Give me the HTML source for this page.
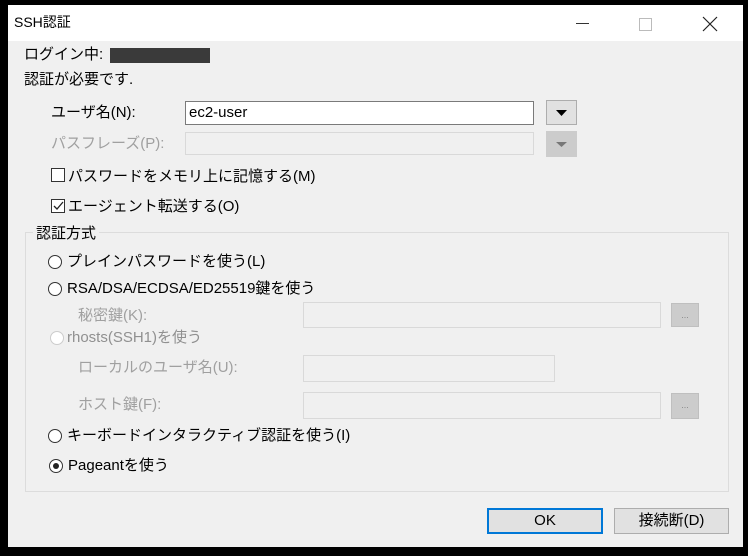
<!DOCTYPE html>
<html><head><meta charset="utf-8"><style>
*{box-sizing:border-box;margin:0;padding:0}
body{width:748px;height:556px;background:#000;position:relative;overflow:hidden;font-family:"Liberation Sans","Noto Sans CJK JP",sans-serif;font-size:15px;color:#000}
.win{position:absolute;left:8px;top:5px;width:735px;height:542px;background:#f0f0f0}
.title{position:absolute;left:0;top:0;width:735px;height:36px;background:#fff}
.a{position:absolute;white-space:nowrap;line-height:18px}
.g{color:#a0a0a0}
.in{position:absolute;background:#fff;border:1px solid #7a7a7a}
.dis{position:absolute;background:#f0f0f0;border:1px solid #d9d9d9}
.btn{position:absolute;background:#e1e1e1;border:1px solid #adadad;text-align:center}
.btnd{position:absolute;background:#cccccc;border:1px solid #bfbfbf;color:#888;text-align:center;font-size:9px;line-height:22px}
.cb{position:absolute;width:14px;height:14px;border:1px solid #333;background:#fff}
.rd{position:absolute;width:14px;height:14px;border:1px solid #333;border-radius:50%;background:#fff}
</style></head><body>
<div class="win">
<div class="title"><span class="a" style="left:6px;top:8px;font-size:14px">SSH認証</span>
<div style="position:absolute;left:568px;top:18px;width:13px;height:1px;background:#333"></div>
<div style="position:absolute;left:631px;top:13px;width:13px;height:13px;border:1px solid #bbb"></div>
<svg style="position:absolute;left:694px;top:11px" width="16" height="16"><path d="M1 1L15 15M15 1L1 15" stroke="#222" stroke-width="1.2"/></svg>
</div>
</div>
<span class="a" style="left:24px;top:46px">ログイン中:</span>
<div style="position:absolute;left:110px;top:48px;width:100px;height:15px;background:#3a3a3a"></div>
<span class="a" style="left:24px;top:71px">認証が必要です.</span>
<span class="a" style="left:51px;top:104px">ユーザ名(N):</span>
<div class="in" style="left:185px;top:101px;width:349px;height:24px"><span class="a" style="left:3px;top:2px">ec2-user</span></div>
<div class="btn" style="left:546px;top:100px;width:31px;height:25px"><svg width="29" height="23"><path d="M9 9L20 9L14.5 15Z" fill="#000"/></svg></div>
<span class="a g" style="left:51px;top:135px">パスフレーズ(P):</span>
<div class="dis" style="left:185px;top:132px;width:349px;height:23px"></div>
<div class="btn" style="left:546px;top:131px;width:31px;height:26px;background:#ccc;border-color:#ccc"><svg width="29" height="24"><path d="M9 10L20 10L14.5 15Z" fill="#777"/></svg></div>
<div class="cb" style="left:51px;top:168px"></div>
<span class="a" style="left:68px;top:168px">パスワードをメモリ上に記憶する(M)</span>
<div class="cb" style="left:51px;top:199px"><svg style="position:absolute;left:0;top:0" width="12" height="12"><path d="M2 6L5 9L11 2" stroke="#222" stroke-width="1.3" fill="none"/></svg></div>
<span class="a" style="left:68px;top:198px">エージェント転送する(O)</span>
<div style="position:absolute;left:25px;top:232px;width:704px;height:260px;border:1px solid #dcdcdc"></div>
<span class="a" style="left:33px;top:225px;background:#f0f0f0;padding:0 3px">認証方式</span>
<div class="rd" style="left:48px;top:255px"></div>
<span class="a" style="left:67px;top:253px">プレインパスワードを使う(L)</span>
<div class="rd" style="left:48px;top:282px"></div>
<span class="a" style="left:67px;top:280px">RSA/DSA/ECDSA/ED25519鍵を使う</span>
<span class="a g" style="left:78px;top:307px">秘密鍵(K):</span>
<div class="dis" style="left:303px;top:302px;width:358px;height:26px"></div>
<div class="btnd" style="left:671px;top:303px;width:28px;height:24px">...</div>
<div class="rd" style="left:50px;top:331px;border-color:#ccc"></div>
<span class="a g" style="left:67px;top:329px;color:#909090">rhosts(SSH1)を使う</span>
<span class="a g" style="left:78px;top:359px">ローカルのユーザ名(U):</span>
<div class="dis" style="left:303px;top:355px;width:252px;height:27px"></div>
<span class="a g" style="left:78px;top:396px">ホスト鍵(F):</span>
<div class="dis" style="left:303px;top:392px;width:358px;height:27px"></div>
<div class="btnd" style="left:671px;top:393px;width:28px;height:26px">...</div>
<div class="rd" style="left:48px;top:429px"></div>
<span class="a" style="left:67px;top:427px">キーボードインタラクティブ認証を使う(I)</span>
<div class="rd" style="left:49px;top:459px"><div style="position:absolute;left:3px;top:3px;width:6px;height:6px;border-radius:50%;background:#222"></div></div>
<span class="a" style="left:68px;top:457px">Pageantを使う</span>
<div class="btn" style="left:487px;top:508px;width:116px;height:26px;border:2px solid #0078d7;line-height:22px">OK</div>
<div class="btn" style="left:614px;top:508px;width:115px;height:26px;line-height:24px">接続断(D)</div>
</body></html>
